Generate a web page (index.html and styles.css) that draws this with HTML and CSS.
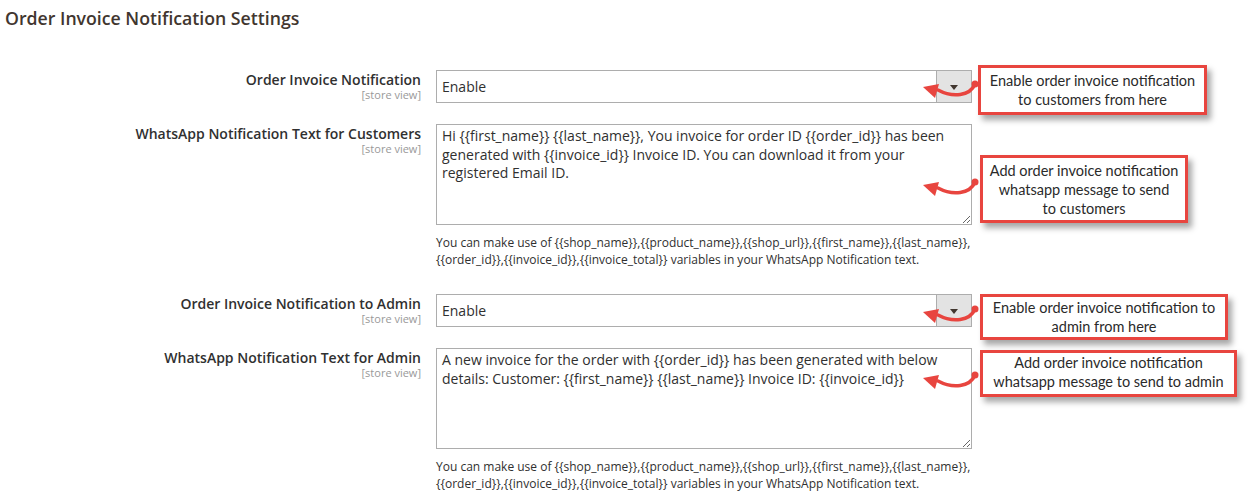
FILE: index.html
```html
<!DOCTYPE html>
<html>
<head>
  <title>Order Invoice Notification Settings</title>
  <link rel="stylesheet" href="styles.css">
</head>
<body>
  <h1 class="section-title">Order Invoice Notification Settings</h1>

  <div class="config">
    <div class="row row-first">
      <div class="label">Order Invoice Notification<span class="scope">[store view]</span></div>
      <div class="field">
        <div class="select">Enable<span class="select-btn"></span></div>
        <div class="callout callout-1">
          <svg class="arrow" width="60" height="26" viewBox="0 0 60 26"><path d="M55 8 C50 20 33 22 18 14" fill="none" stroke="#e8453f" stroke-width="3.5" stroke-linecap="round"/><circle cx="55" cy="8" r="3.5" fill="#e8453f"/><polygon points="3,11 19,8 15,22" fill="#e8453f"/></svg>
          Enable order invoice notification to customers from here
        </div>
      </div>
    </div>

    <div class="row">
      <div class="label">WhatsApp Notification Text for Customers<span class="scope">[store view]</span></div>
      <div class="field">
        <textarea class="textarea">Hi {{first_name}} {{last_name}}, You invoice for order ID {{order_id}} has been generated with {{invoice_id}} Invoice ID. You can download it from your registered Email ID.</textarea>
        <p class="note">You can make use of {{shop_name}},{{product_name}},{{shop_url}},{{first_name}},{{last_name}},<br>{{order_id}},{{invoice_id}},{{invoice_total}} variables in your WhatsApp Notification text.</p>
        <div class="callout callout-2">
          <svg class="arrow" width="60" height="26" viewBox="0 0 60 26"><path d="M55 8 C50 20 33 22 18 14" fill="none" stroke="#e8453f" stroke-width="3.5" stroke-linecap="round"/><circle cx="55" cy="8" r="3.5" fill="#e8453f"/><polygon points="3,11 19,8 15,22" fill="#e8453f"/></svg>
          Add order invoice notification whatsapp message to send<br>to customers
        </div>
      </div>
    </div>

    <div class="row row-gap">
      <div class="label">Order Invoice Notification to Admin<span class="scope">[store view]</span></div>
      <div class="field">
        <div class="select">Enable<span class="select-btn"></span></div>
        <div class="callout callout-3">
          <svg class="arrow" width="60" height="26" viewBox="0 0 60 26"><path d="M55 8 C50 20 33 22 18 14" fill="none" stroke="#e8453f" stroke-width="3.5" stroke-linecap="round"/><circle cx="55" cy="8" r="3.5" fill="#e8453f"/><polygon points="3,11 19,8 15,22" fill="#e8453f"/></svg>
          Enable order invoice notification to admin from here
        </div>
      </div>
    </div>

    <div class="row">
      <div class="label">WhatsApp Notification Text for Admin<span class="scope">[store view]</span></div>
      <div class="field">
        <textarea class="textarea">A new invoice for the order with {{order_id}} has been generated with below details: Customer: {{first_name}} {{last_name}} Invoice ID: {{invoice_id}}</textarea>
        <p class="note">You can make use of {{shop_name}},{{product_name}},{{shop_url}},{{first_name}},{{last_name}},<br>{{order_id}},{{invoice_id}},{{invoice_total}} variables in your WhatsApp Notification text.</p>
        <div class="callout callout-4">
          <svg class="arrow" width="60" height="26" viewBox="0 0 60 26"><path d="M55 8 C50 20 33 22 18 14" fill="none" stroke="#e8453f" stroke-width="3.5" stroke-linecap="round"/><circle cx="55" cy="8" r="3.5" fill="#e8453f"/><polygon points="3,11 19,8 15,22" fill="#e8453f"/></svg>
          Add order invoice notification whatsapp message to send to admin
        </div>
      </div>
    </div>
  </div>
</body>
</html>
```

FILE: styles.css
```css
body {
  margin: 0;
  font-family: "Open Sans", sans-serif;
  color: #303030;
  background: #fff;
}

.section-title {
  font-size: 17.7px;
  font-weight: 600;
  color: #41362f;
  line-height: 23px;
  margin: 7px 0 0 5px;
}

.config {
  padding-top: 40px;
}

.row {
  display: grid;
  grid-template-columns: 421px 536px;
  column-gap: 15px;
  margin-top: 21px;
}

.row-first {
  margin-top: 0;
}

.row-gap {
  margin-top: 26px;
}

.label {
  text-align: right;
  font-size: 14px;
  font-weight: 600;
  line-height: 18px;
  padding-top: 1px;
}

.scope {
  display: block;
  font-size: 11px;
  font-weight: 400;
  line-height: 12px;
  color: #999;
}

.field {
  position: relative;
}

/* select look-alike */
.select {
  position: relative;
  height: 31px;
  border: 1px solid #adadad;
  font-size: 14px;
  line-height: 31px;
  padding-left: 5px;
}

.select-btn {
  position: absolute;
  top: 0;
  right: 0;
  width: 34px;
  height: 31px;
  background: #e3e3e3;
  border-left: 1px solid #adadad;
}

.select-btn::after {
  content: "";
  position: absolute;
  left: 13px;
  top: 14px;
  border-left: 4px solid transparent;
  border-right: 4px solid transparent;
  border-top: 5px solid #41362f;
}

.textarea {
  display: block;
  box-sizing: border-box;
  width: 536px;
  height: 101px;
  margin: 0;
  padding: 2px 5px;
  border: 1px solid #adadad;
  border-radius: 0;
  font-family: "Open Sans", sans-serif;
  font-size: 14px;
  line-height: 18.5px;
  color: #303030;
  resize: vertical;
}

.note {
  margin: 9px 0 0 0;
  font-size: 12px;
  line-height: 17px;
}

/* annotation boxes */
.callout {
  position: absolute;
  left: 544px;
  box-sizing: border-box;
  border: 3px solid #e8453f;
  background: #fff;
  box-shadow: 4px 5px 6px rgba(0, 0, 0, 0.35);
  font-family: Lato, sans-serif;
  font-size: 14.5px;
  line-height: 19px;
  color: #2a2a2a;
  text-align: center;
  padding: 3px 4px;
}

.arrow {
  position: absolute;
  left: -63px;
}

.callout-1 {
  top: -5px;
  left: 542px;
  width: 229px;
  height: 50px;
}

.callout-1 .arrow {
  top: 8px;
  left: -61px;
}

.callout-2 {
  top: 31px;
  width: 208px;
  height: 68px;
  padding: 3px 2px;
}

.callout-2 .arrow {
  top: 16px;
}

.callout-3 {
  top: 0;
  width: 248px;
  height: 46px;
  padding-top: 1px;
}

.callout-3 .arrow {
  top: 4px;
}

.callout-4 {
  top: 2px;
  width: 257px;
  height: 47px;
  padding-top: 0;
}

.callout-4 .arrow {
  top: 14px;
}
```
